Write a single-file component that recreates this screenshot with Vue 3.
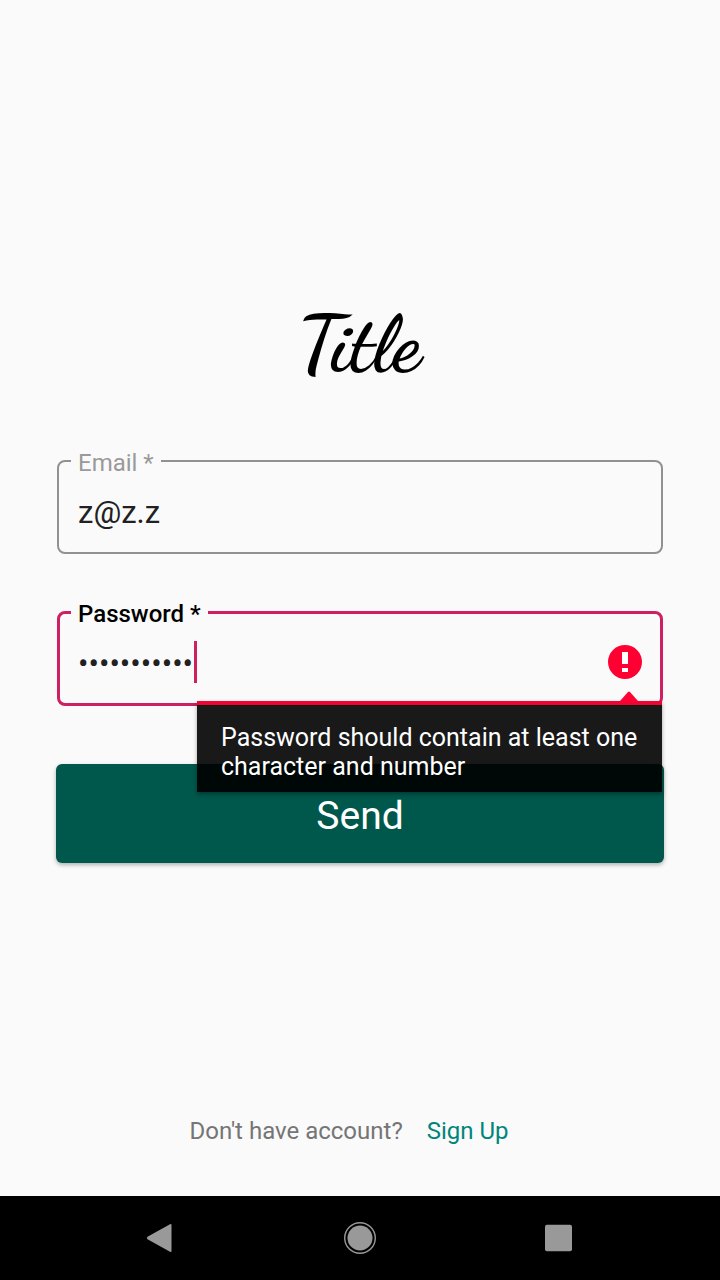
<script setup>
import { ref } from 'vue'

const email = ref('z@z.z')
const password = ref('abcdefghij1')
</script>

<template>
  <div class="screen">
    <main class="content">
      <h1 class="title">Title</h1>

      <form class="form" novalidate @submit.prevent>
        <fieldset class="field">
          <legend><label for="email">Email *</label></legend>
          <input id="email" v-model="email" type="email" autocomplete="off" />
        </fieldset>

        <div class="password-wrap">
          <fieldset class="field active">
            <legend><label for="password">Password *</label></legend>
            <div class="entry">
              <input
                id="password"
                v-model="password"
                type="password"
                autocomplete="off"
                aria-invalid="true"
                aria-describedby="password-error"
              />
              <span class="caret" aria-hidden="true"></span>
              <svg class="alert" viewBox="0 0 34 34" aria-hidden="true">
                <circle cx="17" cy="17" r="17" fill="#ff0033" />
                <path d="M14 7h6v12h-6zM14 23h6v4h-6z" fill="#fff" />
              </svg>
            </div>
          </fieldset>
          <div id="password-error" class="tooltip" role="alert">
            <svg class="arrow" viewBox="0 0 18 11" aria-hidden="true">
              <path d="M0 11V10L8 1Q9 0 10 1L18 10V11Z" fill="#ff0033" />
            </svg>
            <p>Password should contain at least one character and number</p>
          </div>
        </div>

        <button class="send" type="submit">Send</button>
      </form>

      <p class="signup">
        <span>Don't have account?</span>
        <a href="#signup">Sign Up</a>
      </p>
    </main>

    <nav class="navbar" aria-label="System">
      <button type="button" aria-label="Back">
        <svg viewBox="0 0 36 36">
          <path d="M5.500 16.800L28 4.200Q29.500 3.600 29.500 5V31Q29.500 32.400 28 31.800L5.500 19.200Q4 18 5.500 16.800Z" fill="#999" />
        </svg>
      </button>
      <button type="button" aria-label="Home">
        <svg viewBox="0 0 36 36">
          <circle cx="18" cy="18" r="15.300" fill="none" stroke="#999" stroke-width="1.400" />
          <circle cx="18" cy="18" r="12.500" fill="#999" />
        </svg>
      </button>
      <button type="button" aria-label="Recent apps">
        <svg viewBox="0 0 36 36">
          <rect x="3" y="4.700" width="27" height="26.600" rx="2" fill="#999" />
        </svg>
      </button>
    </nav>
  </div>
</template>

<style>
body {
  margin: 0;
  background: #fafafa;
}
</style>

<style scoped>
.screen {
  display: flex;
  flex-direction: column;
  min-height: 100vh;
  background: #fafafa;
  font-family: Roboto, "Liberation Sans", sans-serif;
  color: #212121;
}

.content {
  flex: 1;
  display: flex;
  flex-direction: column;
  padding: 296px 56px 49px;
}

.title {
  margin: 0 0 55px;
  padding-right: 2px;
  font: 700 80px/96px "Dancing Script", "Liberation Serif", serif;
  color: #000;
  text-align: center;
}

.form {
  display: flex;
  flex-direction: column;
}

.field {
  box-sizing: border-box;
  min-width: 0;
  margin: 0 1px;
  padding: 0 16px 0 12px;
  border: 2px solid #919191;
  border-radius: 8px;
}

.field legend {
  padding: 4px 7px 0;
  font-size: 24px;
  line-height: 24px;
  color: #9a9a9a;
}

.field input {
  display: block;
  box-sizing: border-box;
  width: 100%;
  height: 77px;
  padding: 0 7px 2px;
  border: 0;
  outline: 0;
  background: transparent;
  font-family: inherit;
  font-size: 31px;
  color: #212121;
}

.password-wrap {
  position: relative;
  margin-top: 44px;
}

.field.active {
  padding: 0 18px 0 11px;
  border: 3px solid #ce1f63;
}

.field.active legend {
  font-weight: 500;
  color: #000;
}

.entry {
  position: relative;
  display: flex;
  align-items: center;
}

.caret {
  position: absolute;
  left: 123px;
  top: 15px;
  width: 3px;
  height: 42px;
  background: #ce1f63;
}

.alert {
  flex: none;
  width: 34px;
  height: 34px;
  margin-bottom: 5px;
}

.tooltip {
  position: absolute;
  z-index: 1;
  top: calc(100% - 5px);
  right: 2px;
  box-sizing: border-box;
  width: 465px;
  max-width: calc(100% - 4px);
  padding: 18px 24px 11px;
  border-top: 4px solid #f00434;
  background: rgba(0, 0, 0, 0.9);
  background-clip: padding-box;
  box-shadow: 0 2px 4px rgba(0, 0, 0, 0.35);
  font-size: 25px;
  line-height: 29px;
  color: #fff;
}

.tooltip p {
  margin: 0;
}

.arrow {
  position: absolute;
  right: 24px;
  bottom: 100%;
  width: 18px;
  height: 11px;
  margin-bottom: 3px;
}

.send {
  height: 99px;
  margin-top: 58px;
  padding: 4px 0 0;
  border: 0;
  border-radius: 6px;
  background: #00574b;
  box-shadow: 0 2px 4px rgba(0, 0, 0, 0.3);
  font-family: inherit;
  font-size: 39px;
  color: #fff;
}

.signup {
  display: flex;
  justify-content: center;
  gap: 24px;
  margin: auto 0 0;
  padding-right: 22px;
  font-size: 24px;
  line-height: 32px;
  color: #757575;
}

.signup a {
  color: #00857a;
  text-decoration: none;
}

.navbar {
  display: flex;
  height: 84px;
  padding: 0 60px;
  background: #000;
}

.navbar button {
  flex: 1;
  display: flex;
  align-items: center;
  justify-content: center;
  padding: 0;
  border: 0;
  background: transparent;
}

.navbar svg {
  width: 36px;
  height: 36px;
}
</style>
